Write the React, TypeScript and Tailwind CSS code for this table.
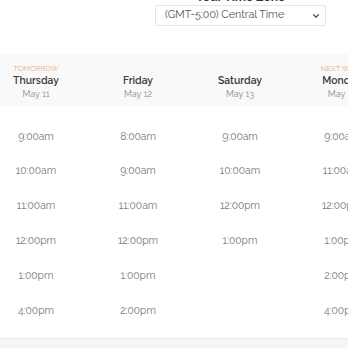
import React from "react";

const days = [
  { label: "TOMORROW", name: "Thursday", date: "May 11", times: ["9:00am", "10:00am", "11:00am", "12:00pm", "1:00pm", "4:00pm"] },
  { label: "", name: "Friday", date: "May 12", times: ["8:00am", "9:00am", "11:00am", "12:00pm", "1:00pm", "2:00pm"] },
  { label: "", name: "Saturday", date: "May 13", times: ["9:00am", "10:00am", "12:00pm", "1:00pm"] },
  { label: "NEXT WEEK", name: "Monday", date: "May 15", times: ["9:00am", "11:00am", "12:00pm", "1:00pm", "2:00pm", "4:00pm"] },
];

export default function App() {
  return (
    <div className="w-[348px] h-[348px] overflow-hidden bg-white" style={{ fontFamily: "Raleway, Lato, 'Noto Sans', sans-serif" }}>
      <div className="h-[54px] flex justify-end pr-[22px]">
        <div className="w-[171px] flex flex-col items-center">
          <div className="mt-[-12px] h-[17px] text-[12px] font-bold text-[#333] leading-[19px]">Your Time Zone</div>
          <div className="w-[171px] h-[21px] border border-[#e6e6e6] rounded-[2px] flex items-center justify-between pl-[9px] pr-[5px] bg-white">
            <span className="text-[10.7px] text-[#555] leading-none">(GMT-5:00) Central Time</span>
            <svg width="8" height="8" viewBox="0 0 10 10" fill="none">
              <path d="M2 3.5 L5 6.5 L8 3.5" stroke="#555" strokeWidth="1.6" strokeLinecap="round" strokeLinejoin="round" />
            </svg>
          </div>
        </div>
      </div>
      <div className="flex ml-[-15px]">
        {days.map((d) => (
          <div key={d.name} className="w-[102px] shrink-0 flex flex-col">
            <div className="h-[52px] bg-[#f9f9f9] flex flex-col items-center pt-[10px]">
              <div className="h-[10px] text-[7.5px] leading-[10px] text-[#eba98a]">{d.label}</div>
              <div className="text-[10.4px] leading-[13px] font-semibold text-[#3a3a3a]">{d.name}</div>
              <div className="mt-[1px] text-[9px] leading-[12px] text-[#8a8a8a]">{d.date}</div>
            </div>
            <div className="h-[13px]" />
            {d.times.map((t) => (
              <div key={t} className="h-[34.8px] flex items-center justify-center text-[10.3px] text-[#767676]">
                {t}
              </div>
            ))}
          </div>
        ))}
      </div>
      <div className="mt-[10px] border-t border-[#ebebeb] h-[20px] bg-[#f5f5f5]" />
    </div>
  );
}
